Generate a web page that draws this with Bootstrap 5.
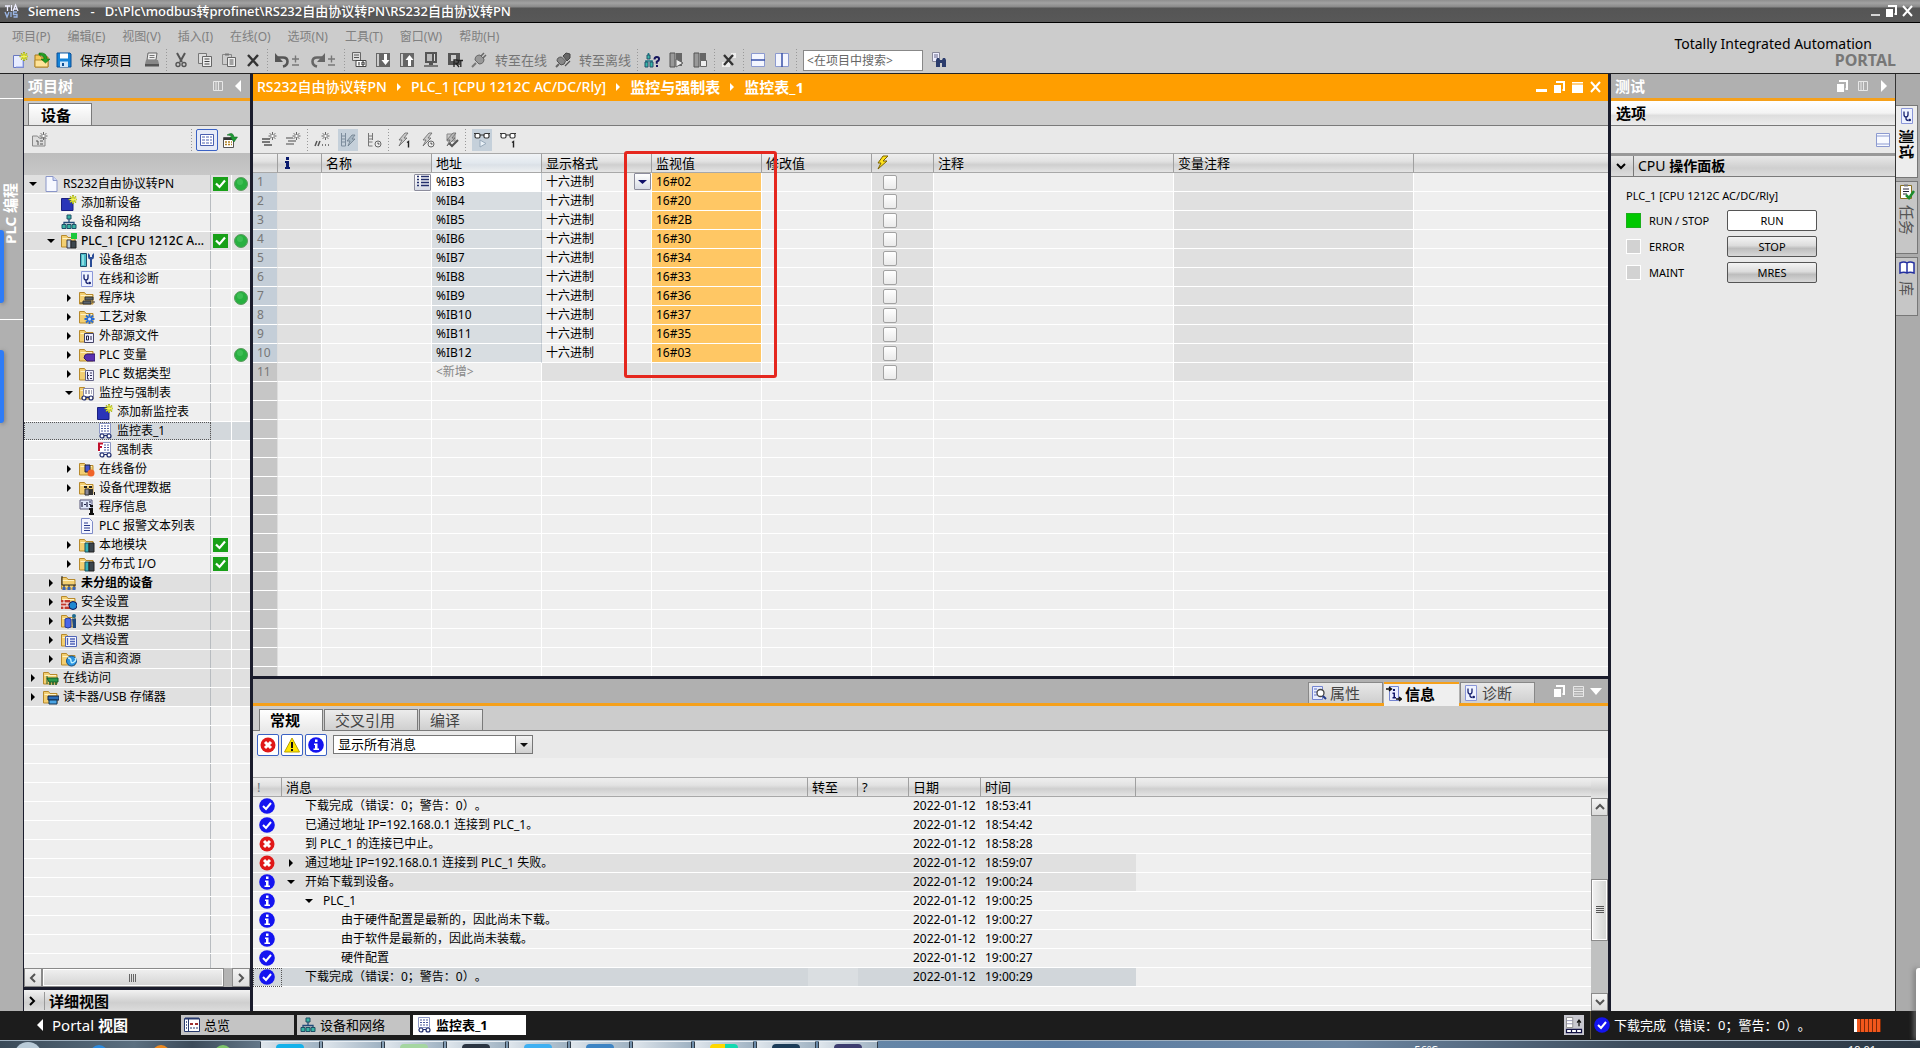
<!DOCTYPE html>
<html lang="zh-CN">
<head>
<meta charset="utf-8">
<meta name="viewport" content="width=device-width, initial-scale=1">
<title>Siemens - RS232自由协议转PN</title>
<link href="https://cdn.jsdelivr.net/npm/bootstrap@5.3.0/dist/css/bootstrap.min.css" rel="stylesheet">
<style>
  :root { --navy:#1a1c2c; --amber:#ff9e00; --pane:#e9e9e9; --cell:#efefef; --shade:#e0e0e0; --bar:#b0b0b0; --rule:#7a7a7a; }
  body { font-family:"Noto Sans","Noto Sans CJK SC",sans-serif; font-size:12px; line-height:18px; color:#000; background:#ccc; text-spacing-trim:space-all; }
  button, input, select { font:inherit; color:inherit; }
  button { background:none; border:0; padding:0; }
  .ic { width:16px; height:16px; flex:none; display:block; }
  .ic-pm { width:12px; }
  .f13 { font-size:13px; } .f14 { font-size:14px; } .f15 { font-size:15px; } .f16 { font-size:16px; }
  .g2 { gap:2px; } .g1 { gap:1px; } .g6 { gap:6px; }
  .min0 { min-height:0; min-width:0; }
  .titlebar { height:23px; background:linear-gradient(#8e8e8e,#a2a2a2 3px,#888 7px,#555 8px,#585858); border-bottom:1px solid #000; color:#fff; line-height:22px; font-weight:500; }
  .apphead { height:51px; border-bottom:1px solid #222; background:#ccc; }
  .menus { gap:17px; padding:5px 0 0 12px; }
  .menus a { color:#808080; text-decoration:none; }
  .tools { color:#757575; padding:3px 0 0 12px; }
  .vsep { width:1px; height:22px; margin:0 -2px; background:repeating-linear-gradient(#999 0 1px,transparent 1px 3px); flex:none; }
  .brand { padding-top:12px; }
  .portal { color:#777; line-height:14px; font-size:16px; font-weight:700; }
  .find { width:120px; height:21px; border:1px solid #888; background:#fff; padding:0 3px; color:#666; font-size:12px; border-radius:0; }
  .find::placeholder { color:#666; opacity:1; }
  .leftstrip { width:24px; background:var(--bar); border-right:1px solid var(--navy); }
  .stripcap { height:25px; border-bottom:1px solid #fff; }
  .stripbody { height:221px; border-bottom:1px solid #fff; }
  .uptext { writing-mode:vertical-rl; text-orientation:sideways; transform:rotate(180deg); color:#fff; font-weight:700; }
  .blue { left:0; width:4px; height:73px; background:#2f7cf6; border-radius:0 3px 3px 0; box-shadow:1px 1px 4px #777; }
  .blue-a { top:156px; } .blue-b { top:276px; }
  .treepane { width:229px; border-right:3px solid var(--navy); background:#c4c4c4; }
  .panehead { height:27px; background:var(--bar); border-bottom:3px solid #f5a01a; color:#fff; font-weight:700; font-size:15px; line-height:22px; }
  .tabrow { height:25px; background:#c8c8c8; border-bottom:1px solid var(--rule); }
  .toptab { height:22px; min-width:64px; background:linear-gradient(#fff,#e9e9e9); border:1px solid var(--rule); border-bottom:0; font-weight:700; font-size:15px; padding:0 12px; line-height:20px; text-align:left; }
  .toolrow { height:27px; background:var(--pane); }
  .boxbtn { width:22px; height:22px; background:#fff; border:1px solid #3b62c4; border-radius:2px; display:flex; align-items:center; justify-content:center; }
  .boxbtn.soft { background:#e6ebf7; }
  .treegap { height:22px; background:linear-gradient(#bdbdbd,#c8c8c8); }
  .trow { height:19px; background:var(--cell); border-bottom:1px solid #fff; }
  .trow.dk { background:var(--shade); }
  .trow.sel { background:#d3d8dc; }
  .trow.sel .tname { outline:1px dotted #555; outline-offset:-1px; }
  .tname { border-right:1px solid #b8bcc0; white-space:nowrap; overflow:hidden; }
  .tcol1 { width:21px; border-right:1px solid #fff; } .tcol2 { width:18px; }
  .tarrow { width:18px; } .tico { width:18px; margin-right:3px; }
  .tarrow svg { width:8px; height:10px; }
  .hbar { height:19px; background:#b4b4b4; }
  .sbtn { width:18px; background:linear-gradient(#f4f4f4,#dcdcdc); border:1px solid #8a8a8a; display:flex; align-items:center; justify-content:center; }
  .sthumb { background:linear-gradient(#f0f0f0,#d4d4d4); border:1px solid #8a8a8a; box-shadow:inset 0 0 0 1px #fff; }
  .details { height:24px; border-top:3px solid var(--navy); background:linear-gradient(#f2f2f2,#cfcfcf 60%,#dcdcdc); font-weight:700; font-size:15px; }
  .details span { border-left:1px solid #999; padding-left:4px; }
  .editor { border-right:3px solid var(--navy); background:var(--pane); }
  .crumbs { height:27px; background:var(--amber); color:#fff; font-weight:500; padding-bottom:2px; }
  .crumbs a { color:#fff; text-decoration:none; }
  .gapband { height:25px; background:#ccc; border-bottom:1px solid var(--rule); }
  .gtable { width:100%; table-layout:fixed; border-collapse:separate; border-spacing:0; }
  .gtable th { height:20px; padding:0 4px; font-weight:400; white-space:nowrap; background:linear-gradient(#efefef,#e2e2e2 40%,#cfcfcf 60%,#e4e4e4); border-top:1px solid #a8a8a8; border-bottom:1px solid #a8a8a8; border-right:1px solid #a0a0a0; line-height:17px; font-size:13px; }
  .gtable td { height:19px; padding:0 4px; line-height:18px; background:var(--cell); border-bottom:1px solid #fff; border-right:1px solid #fff; white-space:nowrap; overflow:hidden; }
  .gtable td:last-child, .gtable th:last-child { border-right:0; }
  .gtable td.g { background:var(--shade); }
  .watch td:first-child { background:#c6c6c6; color:#777; border-right-color:#ddd; }
  .watch tr.live td:first-child { background:#c4ced8; }
  .watch td.ad { background:#d8dde1; border-right-color:#c0c8d0; }
  .watch td.ad1 { background:#fff; border-right-color:#c0c8d0; }
  .watch th.hot { background:linear-gradient(#f0f3f6,#e2e8ee 50%,#dbe1e7 60%,#eef0f2); }
  .watch td.mv { background:#ffc764; }
  .minibtn { width:17px; height:17px; border:1px solid #8c8c9c; background:linear-gradient(#fff,#d8dce6); display:flex; align-items:center; justify-content:center; border-radius:1px; }
  .tick { appearance:none; display:block; width:14px; height:15px; margin:0 0 0 7px; border:1px solid #a2a2a2; border-radius:2px; background:linear-gradient(#fff,#eaeaea); }
  .mark-red { left:371px; top:77px; width:153px; height:227px; border:3px solid #e5271e; border-radius:3px; pointer-events:none; z-index:3; }
  .infopane { border-top:3px solid var(--navy); }
  .infohead { height:27px; background:linear-gradient(var(--bar) 24px,#f5a01a 24px); }
  .itab { width:75px; height:21px; margin-top:3px; background:linear-gradient(#e8e8e8,#cfcfcf); border:1px solid #888; border-bottom:0; color:#444; font-size:15px; display:flex; align-items:center; gap:3px; padding-left:2px; line-height:18px; }
  .itab.on { height:24px; background:#efefef; border:0; border-top:2px solid #f5a01a; padding-bottom:3px; color:#000; font-weight:700; }
  .subtabs { padding-left:6px; }
  .subtab { height:21px; border:1px solid var(--rule); border-bottom:0; background:linear-gradient(#ececec,#cfcfcf); color:#444; font-size:15px; padding:0 22px 0 10px; line-height:19px; margin-right:1px; text-align:left; }
  .subtab.on { background:linear-gradient(#fff,#e9e9e9); color:#000; font-weight:700; height:22px; margin-bottom:-1px; }
  .combo { width:200px; height:19px; border:1px solid #777; background:#fff; }
  .combo select { appearance:none; border:0; background:transparent; padding:0 4px; outline:0; font-size:13px; line-height:17px; }
  .combo span { width:17px; border-left:1px solid #777; background:linear-gradient(#f4f4f4,#d0d0d0); }
  .msg td { border-right:0; }
  .msg tr.sel td { background:#d1d6da; } .msg tr.sel td.lt { background:#dadee1; }
  .msg tr.sel td:first-child { outline:1px dotted #555; outline-offset:-1px; }
  .msg tr td.rest { background:var(--cell); }
  .msggap { height:19px; background:#efefef; }
  .msgbox { height:234px; }
  .vbar { width:17px; background:#c0c1c1; }
  .vbarcap { height:21px; background:linear-gradient(#efefef,#d0d0d0 60%,#e4e4e4); border-top:1px solid #a8a8a8; }
  .above { flex:6 0 0; } .below { flex:5 0 0; }
  .vbar .sbtn, .vbar .sthumb { width:17px; height:18px; }
  .vbar .sthumb { height:62px; background:linear-gradient(90deg,#f2f2f2,#d4d6d4); }
  .testpane { width:285px; background:var(--pane); border-right:1px solid #333; }
  .opthead { height:25px; background:linear-gradient(#fff,#f4f4f4 50%,#dedede 60%,#ececec); border-bottom:1px solid var(--rule); font-weight:700; font-size:15px; padding:0 5px; }
  .cpuhead { height:24px; border-top:3px solid #999; border-bottom:1px solid var(--rule); background:linear-gradient(#e8e8e8,#cfcfcf 60%,#dcdcdc); font-size:14px; padding-left:2px; }
  .cpuhead span { border-left:1px solid #777; padding-left:4px; line-height:20px; }
  .led { width:15px; height:15px; background:#d2d2d2; border:1px solid #fff; } .led.go { background:#00c800; border-color:#1cae1c; }
  .cpu { font-size:11px; padding:10px 15px 0; display:flex; flex-direction:column; gap:5px; }
  .cpulabel { width:78px; }
  .opbtn { width:90px; height:21px; border:1px solid #555; border-radius:2px; background:linear-gradient(#f4f4f4,#dcdcdc 45%,#bdbdbd 60%,#d8d8d8); }
  .opbtn.run { background:#fff; }
  .rstrip { width:24px; background:#ababab; }
  .vtab { width:22px; border:1px solid #777; border-left:0; background:#c6c6c6; color:#555; font-size:15px; display:flex; flex-direction:column; align-items:center; padding-top:2px; gap:5px; margin-bottom:3px; }
  .vtab.on { background:#ededed; color:#000; font-weight:700; }
  .vtab span { writing-mode:vertical-rl; text-orientation:sideways; line-height:18px; }
  .v1 { height:73px; margin-top:31px; } .v2 { height:73px; } .v3 { height:59px; }
  .popedge { right:0; bottom:8px; width:4px; height:72px; background:#fff; border-radius:3px 0 0 0; box-shadow:-2px 0 5px #777; }
  .status { height:29px; background:#1c1c1c; color:#fff; padding-bottom:1px; }
  .portalbtn { width:181px; padding-left:32px; }
  .winbtn { width:113px; height:20px; background:#c4c4c4; color:#000; display:flex; align-items:center; gap:4px; padding-left:3px; margin-right:3px; font-size:13px; }
  .winbtn.on { background:#fff; font-weight:700; }
  .dockic { width:20px; height:20px; margin-right:6px; }
  .statmsg { width:330px; border-left:1px solid #5b5138; padding-left:3px; }
  .prog { width:27px; height:13px; margin-right:39px; background:repeating-linear-gradient(90deg,#f2571c 0 3px,#7d2a08 3px 4px); border-left:3px solid #fff; }
  .taskbar { height:8px; overflow:hidden; background:linear-gradient(90deg,#3a4a58,#5b6f80 7%,#3c4b5a 10%,#8aa2b6 17%,#6a8aa8 40%,#5c7ea4 55%,#6c86a2 70%,#3d4c5c 85%,#2c3844); border-top:1px solid #9fb0bf; }
  .tb { width:60px; height:8px; margin-right:2px; background:linear-gradient(90deg,#dfe6ec,#9fb2c2); border:1px solid #2f3b47; border-top-color:#e8eef3; display:flex; justify-content:center; }
  .tb i { width:28px; height:7px; margin-top:2px; border-radius:4px 4px 0 0; }
  .tbs { margin-left:25px; }
  .orb { width:28px; height:28px; border-radius:50%; background:#b9cbd8; margin:1px 0 0 14px; }
  .blob { width:18px; height:18px; border-radius:50%; margin:4px 0 0 44px; }
  .clk { color:#fff; font-size:11px; line-height:14px; margin-top:2px; }
</style>
<script src="https://cdn.jsdelivr.net/npm/bootstrap@5.3.0/dist/js/bootstrap.bundle.min.js"></script>
</head>
<body class="vh-100 d-flex flex-column overflow-hidden position-relative">

<header class="titlebar d-flex align-items-center flex-shrink-0">
  <svg class="ic ms-1" data-ic="tia"></svg>
  <div class="f13 ms-2 flex-grow-1 text-nowrap">Siemens &nbsp; - &nbsp; D:\Plc\modbus转profinet\RS232自由协议转PN\RS232自由协议转PN</div>
  <div class="d-flex me-1">
    <button aria-label="最小化"><svg class="ic" data-ic="wmin"></svg></button>
    <button aria-label="还原"><svg class="ic" data-ic="wrest"></svg></button>
    <button aria-label="关闭"><svg class="ic" data-ic="wx"></svg></button>
  </div>
</header>

<div class="apphead d-flex justify-content-between flex-shrink-0">
  <div>
    <nav class="menus d-flex">
      <a href="#">项目(P)</a><a href="#">编辑(E)</a><a href="#">视图(V)</a><a href="#">插入(I)</a><a href="#">在线(O)</a><a href="#">选项(N)</a><a href="#">工具(T)</a><a href="#">窗口(W)</a><a href="#">帮助(H)</a>
    </nav>
    <div class="tools d-flex align-items-center gap-2 f13 text-nowrap" id="tools"></div>
  </div>
  <div class="brand text-end me-4">
    <div class="f14 me-4">Totally Integrated Automation</div>
    <div class="portal">PORTAL</div>
  </div>
</div>

<main class="d-flex flex-grow-1 min0">
  <aside class="leftstrip flex-shrink-0 position-relative">
    <div class="stripcap"></div>
    <div class="stripbody d-flex align-items-center justify-content-center pt-2 pe-1"><span class="uptext f15">PLC 编程</span></div>
    <div class="blue blue-a position-absolute"></div>
    <div class="blue blue-b position-absolute"></div>
  </aside>

  <section class="treepane flex-shrink-0 d-flex flex-column">
    <div class="panehead d-flex align-items-center px-1 flex-shrink-0">
      <span class="flex-grow-1">项目树</span>
      <svg class="ic" data-ic="cols"></svg><svg class="ic ms-1" data-ic="triL"></svg>
    </div>
    <div class="tabrow d-flex align-items-end px-1 flex-shrink-0"><button class="toptab">设备</button></div>
    <div class="toolrow d-flex align-items-center px-2 flex-shrink-0">
      <svg class="ic" data-ic="newfold"></svg>
      <span class="vsep ms-auto me-1"></span>
      <button class="boxbtn soft" aria-label="列表"><svg class="ic" data-ic="grid"></svg></button>
      <svg class="ic mx-1" data-ic="export"></svg>
    </div>
    <div class="treegap flex-shrink-0"></div>
    <div id="tree" class="flex-grow-1 min0 overflow-hidden"></div>
    <div class="hbar d-flex flex-shrink-0">
      <button class="sbtn" aria-label="左"><svg class="ic" data-ic="chL"></svg></button>
      <div class="sthumb me-2 flex-grow-1 d-flex align-items-center justify-content-center"><svg class="ic" data-ic="gripV"></svg></div>
      <button class="sbtn" aria-label="右"><svg class="ic" data-ic="chR"></svg></button>
    </div>
    <div class="details d-flex align-items-center flex-shrink-0"><svg class="ic me-1" data-ic="chRb"></svg><span>详细视图</span></div>
  </section>

  <section class="editor flex-grow-1 min0 d-flex flex-column position-relative">
    <div class="crumbs d-flex align-items-center px-1 f14 flex-shrink-0">
      <a href="#">RS232自由协议转PN</a><svg class="ic mx-1" data-ic="triS"></svg>
      <a href="#">PLC_1 [CPU 1212C AC/DC/Rly]</a><svg class="ic mx-1" data-ic="triS"></svg>
      <a href="#" class="fw-bold f15">监控与强制表</a><svg class="ic mx-1" data-ic="triS"></svg>
      <a href="#" class="fw-bold f15 flex-grow-1">监控表_1</a>
      <div class="d-flex g2">
        <button aria-label="最小化"><svg class="ic" data-ic="wmin2"></svg></button>
        <button aria-label="浮动"><svg class="ic" data-ic="wrest"></svg></button>
        <button aria-label="最大化"><svg class="ic" data-ic="wmax"></svg></button>
        <button aria-label="关闭"><svg class="ic" data-ic="wx"></svg></button>
      </div>
    </div>
    <div class="gapband flex-shrink-0"></div>
    <div class="toolrow d-flex align-items-center gap-2 px-2 flex-shrink-0" id="wtools"></div>
    <div class="flex-grow-1 min0 overflow-hidden">
      <table class="gtable watch">
        <colgroup><col style="width:25px"><col style="width:44px"><col style="width:110px"><col style="width:110px"><col style="width:110px"><col style="width:110px"><col style="width:110px"><col style="width:62px"><col style="width:240px"><col style="width:240px"><col></colgroup>
        <thead><tr><th></th><th><svg class="ic" data-ic="ismall"></svg></th><th>名称</th><th class="hot">地址</th><th>显示格式</th><th>监视值</th><th>修改值</th><th><svg class="ic" data-ic="bolt"></svg></th><th>注释</th><th>变量注释</th><th></th></tr></thead>
        <tbody id="watch"></tbody>
      </table>
    </div>
    <div class="mark-red position-absolute"></div>

    <section class="infopane flex-shrink-0">
      <div class="infohead d-flex justify-content-end align-items-start g1">
        <button class="itab"><svg class="ic" data-ic="prop"></svg>属性</button>
        <button class="itab on"><svg class="ic" data-ic="infot"></svg>信息</button>
        <button class="itab"><svg class="ic" data-ic="diag"></svg>诊断</button>
        <div class="d-flex g2 pt-1 ps-3 pe-1"><svg class="ic" data-ic="wrest"></svg><svg class="ic" data-ic="rows"></svg><svg class="ic" data-ic="triD"></svg></div>
      </div>
      <div class="gapband subtabs d-flex align-items-end">
        <button class="subtab on">常规</button><button class="subtab">交叉引用</button><button class="subtab">编译</button>
      </div>
      <div class="toolrow d-flex align-items-center px-1 g2">
        <button class="boxbtn" aria-label="错误"><svg class="ic" data-ic="err"></svg></button>
        <button class="boxbtn" aria-label="警告"><svg class="ic" data-ic="warn"></svg></button>
        <button class="boxbtn" aria-label="信息"><svg class="ic" data-ic="inf"></svg></button>
        <div class="combo d-flex ms-1"><select class="flex-grow-1" aria-label="显示"><option>显示所有消息</option></select><span class="d-flex align-items-center justify-content-center"><svg class="ic" data-ic="dd"></svg></span></div>
      </div>
      <div class="msggap"></div>
      <div class="msgbox d-flex overflow-hidden">
        <div class="flex-grow-1 min0">
        <table class="gtable msg">
          <colgroup><col style="width:29px"><col style="width:526px"><col style="width:50px"><col style="width:51px"><col style="width:72px"><col style="width:155px"><col></colgroup>
          <thead><tr><th class="text-secondary">!</th><th>消息</th><th>转至</th><th>?</th><th>日期</th><th>时间</th><th></th></tr></thead>
          <tbody id="msgs"></tbody>
        </table>
        </div>
        <div class="vbar d-flex flex-column">
          <div class="vbarcap"></div>
          <button class="sbtn" aria-label="上"><svg class="ic" data-ic="chU"></svg></button>
          <div class="above"></div>
          <div class="sthumb d-flex align-items-center"><svg class="ic" data-ic="gripH"></svg></div>
          <div class="below"></div>
          <button class="sbtn" aria-label="下"><svg class="ic" data-ic="chD"></svg></button>
        </div>
      </div>
    </section>
  </section>

  <aside class="testpane flex-shrink-0">
    <div class="panehead d-flex align-items-center px-1"><span class="flex-grow-1">测试</span><svg class="ic" data-ic="wrest"></svg><svg class="ic mx-1" data-ic="cols"></svg><svg class="ic" data-ic="triR"></svg></div>
    <div class="opthead d-flex align-items-center">选项</div>
    <div class="toolrow d-flex align-items-center justify-content-end px-1"><svg class="ic" data-ic="panel"></svg></div>
    <div class="cpuhead d-flex align-items-center"><svg class="ic me-1" data-ic="chDb"></svg><span>CPU <b>操作面板</b></span></div>
    <div class="cpu">
      <div>PLC_1 [CPU 1212C AC/DC/Rly]</div>
      <div class="d-flex align-items-center"><i class="led go me-2"></i><span class="cpulabel">RUN / STOP</span><button class="opbtn run">RUN</button></div>
      <div class="d-flex align-items-center"><i class="led me-2"></i><span class="cpulabel">ERROR</span><button class="opbtn">STOP</button></div>
      <div class="d-flex align-items-center"><i class="led me-2"></i><span class="cpulabel">MAINT</span><button class="opbtn">MRES</button></div>
    </div>
  </aside>
  <nav class="rstrip flex-shrink-0">
    <button class="vtab v1 on"><svg class="ic" data-ic="diag"></svg><span>测试</span></button>
    <button class="vtab v2"><svg class="ic" data-ic="task"></svg><span>任务</span></button>
    <button class="vtab v3"><svg class="ic" data-ic="book"></svg><span>库</span></button>
  </nav>
</main>

<footer class="status d-flex align-items-center flex-shrink-0">
  <button class="portalbtn f15 d-flex align-items-center"><svg class="ic me-1" data-ic="triL"></svg>Portal&nbsp;<b>视图</b></button>
  <button class="winbtn"><svg class="ic" data-ic="over"></svg>总览</button>
  <button class="winbtn"><svg class="ic" data-ic="net"></svg>设备和网络</button>
  <button class="winbtn on"><svg class="ic" data-ic="wt"></svg>监控表_1</button>
  <svg class="dockic ms-auto" data-ic="dock"></svg>
  <div class="statmsg d-flex align-items-center f13 h-100"><svg class="ic" data-ic="ok"></svg><span class="flex-grow-1 ms-1">下载完成（错误：0；警告：0）。</span><div class="prog"></div></div>
</footer>
<div class="taskbar d-flex flex-shrink-0">
  <div class="orb flex-shrink-0"></div><div class="blob ms-5" style="background:#2c8be0"></div><div class="blob" style="background:#ef8a1e"></div><div class="blob" style="background:#7fc66a"></div>
  <div class="tbs d-flex ms-4 ps-1">
    <div class="tb"><i style="background:#14b1ea"></i></div><div class="tb"></div><div class="tb"><i style="background:#a5d6a0"></i></div><div class="tb"><i style="background:#2b3542"></i></div><div class="tb"><i style="background:#3fb0f2"></i></div><div class="tb"><i style="background:#3d84c4"></i></div><div class="tb"></div><div class="tb"><i style="background:linear-gradient(90deg,#ffd800 55%,#12d9b0 55%)"></i></div><div class="tb"><i style="background:#1c3c58"></i></div><div class="tb"><i style="background:#3d3d70"></i></div>
  </div>
  <div class="clk ms-auto" style="margin-right:410px">56℃</div><div class="clk" style="margin-right:44px">19:01</div>
</div>
<div class="popedge position-absolute"></div>

<script>
const fold = '<path d="M.5 14V2.500h5l1.500 2h7V14z" fill="#f3cf72" stroke="#b88a2c"/><path d="M1.500 5.500h11.500" stroke="#fff2c4"/>';
const doc = '<path d="M2.500.5h8l3 3v12h-11z" fill="#f4f6ff" stroke="#7f8cc8"/>';
const glasses = '<circle cx="5" cy="13" r="2" fill="#fff" stroke="#1d2a6b" stroke-width="1.200"/><circle cx="12" cy="13" r="2" fill="#fff" stroke="#1d2a6b" stroke-width="1.200"/><path d="M7 12.500h3" stroke="#1d2a6b"/>';
const sheet = '<path d="M2.500.5h11v10h-11z" fill="#fff" stroke="#8c97c4"/><path d="M4 3h8M4 5.500h8M4 8h8" stroke="#4a5a9c" stroke-dasharray="2 1"/>';
const star = '<path d="M12 0v9M7.500 4.500h9M9 1.500l6 6M15 1.500l-6 6" stroke="#9aa800" stroke-width="1.600"/><path d="M12 1v7M8.500 4.500h7M9.500 2l5 5M14.500 2l-5 5" stroke="#f4f45a"/>';
const gstar = '<path d="M11.500 0v8M7.500 4h8M8.700 1.200l5.600 5.600M14.300 1.200l-5.600 5.600" stroke="#666"/><circle cx="11.500" cy="4" r="1.200" fill="#fff"/>';
const steth = '<path d="M5 3.500v3q0 2.500 2 2.500t2-2.500v-3M7 9v1.500q0 2 2.500 2" fill="none" stroke="#16206e" stroke-width="1.300"/><circle cx="10.700" cy="12" r="1.300" fill="#16206e"/>';
const rack = '<path d="M6 6h4v9H6z" fill="#39b3b8" stroke="#1c5060"/><path d="M10 6h5v9h-5z" fill="#3c464e" stroke="#222"/>';
const bolt = c => `<path d="M10 1 4 8h3l-3 6 8-8H9l4-5z" fill="${c}" stroke="#666" stroke-width=".8"/>`;
const num1 = '<path d="M12 10.500l1.500-1v6" fill="none" stroke="#222" stroke-width="1.400"/>';
const clock = '<circle cx="12" cy="12" r="3" fill="#eee" stroke="#666"/><path d="M12 10.500V12h1.500" stroke="#444" fill="none"/>';
const goggles = '<path d="M0 1.500h3M13 1.500h3M6 3h4" stroke="#333"/><rect x="1" y="1.500" width="5" height="4.500" rx="1.500" fill="#fff" stroke="#333" stroke-width="1.200"/><rect x="10" y="1.500" width="5" height="4.500" rx="1.500" fill="#fff" stroke="#333" stroke-width="1.200"/>';
const chev = (d,w,c) => `<path d="${d}" fill="none" stroke="${c}" stroke-width="${w}"/>`;
const I = {
 tia:'<path d="M1 3h5M3.500 3v5M7.500 2v6M9 8l2.500-6L14 8M10 6h3" stroke="#eef" stroke-width="1.300" fill="none"/><path d="M1 9l2 5 2-5M7 9v5M13 9H9.500v2.500H13V14H9.500" stroke="#9ab6e6" stroke-width="1.300" fill="none"/>',
 wmin:'<path d="M3 12h9" stroke="#fff" stroke-width="1.500"/>', wmin2:'<path d="M2 11.500h11" stroke="#fff" stroke-width="3"/>',
 wrest:'<path d="M2 6h7v8H2z" fill="#fff"/><path d="M5 4V3h7v8h-1.500" fill="none" stroke="#fff" stroke-width="2"/>',
 wmax:'<path d="M2 3h11v11H2z" fill="#fff"/><path d="M2 5h11" stroke="#ff9e00"/>',
 wx:'<path d="M3 3l9 10M12 3 3 13" stroke="#fff" stroke-width="2"/>',
 cols:'<path d="M3.500 3.500h9v9h-9zM6 3.500v9M8.500 3.500v9" fill="none" stroke="#e8e8e8"/>',
 rows:'<path d="M3.500 3.500h10v10h-10zM3.500 6h10M3.500 8.500h10M3.500 11h10" fill="none" stroke="#e8e8e8"/>',
 triL:'<path d="M11 2v12L5 8z" fill="#fff"/>', triR:'<path d="M6 2v12l6-6z" fill="#fff"/>', triD:'<path d="M2 5h12l-6 7z" fill="#fff"/>', triS:'<path d="M6 4v8l4-4z" fill="#fff"/>',
 dd:'<path d="M4 6h8l-4 4z" fill="#111"/>', ddb:'<path d="M3 6h9l-4.500 4z" fill="#10106a"/>',
 chL:chev('M10 4 6 8l4 4',2,'#555'), chR:chev('M6 4l4 4-4 4',2,'#555'), chU:chev('M4 10l4-4 4 4',2,'#555'), chD:chev('M4 6l4 4 4-4',2,'#555'),
 chRb:chev('M6 4l4 4-4 4',2,'#000'), chDb:chev('M4 6l4 4 4-4',2,'#000'),
 gripV:'<path d="M4.500 4v8M6.500 4v8M8.500 4v8M10.500 4v8" stroke="#666"/>', gripH:'<path d="M4 4.500h8M4 6.500h8M4 8.500h8M4 10.500h8" stroke="#555"/>',
 newprj:'<path d="M1.500 3.500h7l3 3v9h-10z" fill="#e8edff" stroke="#6878c0"/><path d="M4 15h7V8" stroke="#8fa0e8" fill="none"/>'+star,
 openprj:'<path d="M1 3h5l1 2h7v10H1z" fill="#f5c95a" stroke="#a87a1c"/><path d="M1 15V8h13v7z" fill="#ffe49a" stroke="#b58a2e"/><path d="M5 1q8-1 8 6h3l-4.500 4L7 7h3q0-4-5-4z" fill="#22a022" stroke="#0b650b" stroke-width=".6"/>',
 save:'<path d="M1 1h13l1 1v13H1z" fill="#1583d8" stroke="#0b4f96"/><path d="M4 1.500h8v5H4z" fill="#fff"/><path d="M4 9.500h8V15H4z" fill="#cfe6fa"/><path d="M6 11h2v3H6z" fill="#0b4f96"/>',
 print:'<path d="M4 1h9l-1 7H3z" fill="#eee" stroke="#666"/><path d="M5.500 3.500h5M5.500 5.500h5" stroke="#777"/><path d="M2 8h12l1 4H1z" fill="#888"/><path d="M1 12h14v2.500H1z" fill="#555"/>',
 cut:'<path d="M4 1l5 9M12 1 7 10" stroke="#555" stroke-width="2"/><circle cx="5" cy="12.500" r="2" fill="none" stroke="#555" stroke-width="1.400"/><circle cx="11" cy="12.500" r="2" fill="none" stroke="#555" stroke-width="1.400"/>',
 copy:'<path d="M1.500 1.500h8v10h-8z" fill="#ddd" stroke="#777"/><path d="M5.500 4.500h9v10h-9z" fill="#eee" stroke="#666"/><path d="M7.500 7h5M7.500 9.500h5M7.500 12h5" stroke="#444"/>',
 paste:'<path d="M1.500 2.500h9v10h-9z" fill="#ccc" stroke="#888"/><path d="M4 1.500h4v2H4z" fill="#777"/><path d="M6.500 5.500h8v9h-8z" fill="#eee" stroke="#666"/><path d="M8.500 8h4M8.500 10h4M8.500 12h4" stroke="#555"/>',
 del:'<path d="M3 3l10 11M13 3 3 14" stroke="#333" stroke-width="2.400"/>',
 undo:'<path d="M4 5.500h5q4.500 0 4.500 4t-4.500 5" fill="none" stroke="#555" stroke-width="2.600"/><path d="M1 1v9h8z" fill="#555"/>',
 redo:'<path d="M12 5.500H7q-4.500 0-4.500 4t4.500 5" fill="none" stroke="#666" stroke-width="2.600"/><path d="M15 1v9H7z" fill="#666"/>',
 pm:'<path d="M2 7h7M5.500 3.500v7M2 13h7" stroke="#777" stroke-width="1.400"/>',
 comp:'<path d="M1.500.5h8v8h-8z" fill="#ddd" stroke="#666"/><path d="M3 3h5M3 5.500h5" stroke="#555"/><path d="M5 8.500h10v6H5z" fill="#fff" stroke="#444"/><path d="M8 10v3.500M11 10h2v3h-2z" stroke="#222" fill="none"/>',
 down:'<path d="M1 1h14v14H1z" fill="#666"/><path d="M3 2v12" stroke="#ccc" stroke-width="2"/><path d="M9 2h3v6h2.500L10.500 13 6.500 8H9z" fill="#fff"/>',
 up:'<path d="M1 1h14v14H1z" fill="#666"/><path d="M3 2v12" stroke="#ccc" stroke-width="2"/><path d="M9 14h3V8h2.500L10.500 3 6.500 8H9z" fill="#fff"/>',
 sim:'<path d="M2 0h12v11H2z" fill="#555"/><path d="M4 2h5v7H4z" fill="#bbb"/><path d="M11.500 2v7" stroke="#ddd"/><path d="M6 11h4v2H6z" fill="#555"/><path d="M1 13h14v2H1z" fill="#777"/>',
 rt:'<path d="M1 1h12v12H1z" fill="#555"/><path d="M4 3h5v6H4z" fill="#ccc"/><path d="M7 15V8h2.500q2 0 2 1.800T9 11.500l3 3.500M11.500 8.500H16M13.800 8.500V15" stroke="#222" stroke-width="1.300" fill="none"/>',
 plug:'<path d="M1 15l4-4" stroke="#777" stroke-width="2"/><path d="M4 8l4 4q5 0 5-5L9 3Q4 3 4 8z" fill="#999" stroke="#666"/><path d="M10 4l3-3M12 6l3-3" stroke="#666" stroke-width="1.500"/>',
 plug2:'<path d="M1 15l3-3" stroke="#666" stroke-width="2"/><path d="M2 9l4 4q4 0 4.500-4L6.500 5Q2 5 2 9z" fill="#888" stroke="#555"/><path d="M8 4l3-3 4 1v4l-3 3z" fill="#666" stroke="#444"/><path d="M10 14l5-5" stroke="#555" stroke-width="1.300"/>',
 acc:'<path d="M4.500 1v6M2 14V9h6v5" stroke="#1b7a86" stroke-width="1.600" fill="none"/><path d="M3 3h3v4H3zM1 10h3v5H1zM6 10h3v5H6z" fill="#35b8a8" stroke="#22506a"/><path d="M10.500 7.500q0-2.500 2.300-2.500t2.200 2.200q0 1.500-2.200 2.500v2" stroke="#14145c" stroke-width="2" fill="none"/><path d="M12 13h2v2h-2z" fill="#14145c"/>',
 start:'<path d="M2 1h5v14H2z" fill="#999" stroke="#555"/><path d="M8 1h6v13H8z" fill="#666"/><path d="M8 7l7 4-7 4z" fill="#eee" stroke="#666"/>',
 stop:'<path d="M2 1h5v14H2z" fill="#999" stroke="#555"/><path d="M8 1h6v13H8z" fill="#666"/><path d="M8.500 8.500h6v6h-6z" fill="#eee" stroke="#666"/>',
 xref:'<path d="M1 10h8v5H1zM10 1h5v5h-5z" fill="#eee"/><path d="M3 3l9 10M12 3 3 13" stroke="#333" stroke-width="2.400"/>',
 splh:'<path d="M1.500 1.500h13v13h-13z" fill="#f4f6ff" stroke="#8c9ad0"/><path d="M1 8h14" stroke="#3850a8" stroke-width="1.500"/>',
 splv:'<path d="M1.500 1.500h13v13h-13z" fill="#f4f6ff" stroke="#8c9ad0"/><path d="M8 1v14" stroke="#3850a8" stroke-width="1.500"/>',
 bino:'<path d="M1.500.5h7v9h-7z" fill="#eef" stroke="#889"/><path d="M3 3h4M3 5h4" stroke="#668"/><path d="M5 8l1-2h2l1 2h2l1-2h2l1 2v7h-4v-4h-2v4H5z" fill="#2b3c6c"/>',
 newfold:'<path d="M.5 14V4h5l1.500 2h6V14z" fill="#ddd" stroke="#888"/><path d="M4 9h2v4M8 9h3M8 12h3" stroke="#555" fill="none"/>'+gstar,
 grid:'<path d="M1.500 2.500h13v11h-13z" fill="#fff" stroke="#4a60b0"/><path d="M3 5h10M3 8h10M3 11h10" stroke="#4a60b0" stroke-dasharray="3 1"/>',
 export:'<path d="M1.500 5.500h10v10h-10z" fill="#fff" stroke="#555"/><path d="M2 6h9v2H2z" fill="#333"/><path d="M3 10h7M3 12.500h7" stroke="#b08020" stroke-dasharray="2 1" stroke-width="1.500"/><path d="M5 3q6-4 7 2h3.500L12 10 8 5h2q-1-2-5-2z" fill="#1e9a34" stroke="#0c5c1c" stroke-width=".5"/>',
 ins:'<path d="M1 7h8M1 10h8M3 13h8" stroke="#777" stroke-width="2"/>'+gstar, ins2:'<path d="M1 6h7M3 9h8M1 12h8" stroke="#999" stroke-width="2"/>'+gstar,
 cmt:'<path d="M3 9l-2 5M6 9l-2 5M8 13h1M11 13h1M14 13h1" stroke="#555" stroke-width="1.500"/>'+gstar,
 b1:'<path d="M1.500 1v13h4M5.500 1v13M1.500 4h4M1.500 7h4M1.500 10h4" stroke="#7c8c9c" fill="none"/><path d="M12 3 7 9h3l-2 5 7-7h-3l3-4z" fill="#a8b8c4" stroke="#6c7c8c" stroke-width=".8"/>',
 b2:'<path d="M2.500 1v13h4M6.500 1v7M2.500 4h4M2.500 7h4M2.500 10h4" stroke="#777" fill="none"/>'+clock,
 z1:bolt('#ccc')+num1, z2:bolt('#ccc')+clock, z3:'<path d="M4 2h8v7H4z" fill="#ccc" stroke="#888"/>'+bolt('#bbb')+'<path d="M6 11l3 3 6-6" stroke="#555" stroke-width="2" fill="none"/>',
 g1:goggles+'<path d="M6 8v7l6-3.500z" fill="#e8f0f6" stroke="#9ab"/>', g2:goggles+num1,
 bolt:'<path d="M7 1 2 8h3l-3 6 9-8H7l5-5z" fill="#ffe11c" stroke="#7a6200"/>', ismall:'<path d="M4 2h3v3H4zM3 6h4v6h1v2H3v-2h1V8H3z" fill="#0a1a6c"/>',
 list:'<path d="M2 2.500h2M2 5.500h2M2 8.500h2M2 11.500h2M6 2.500h8M6 5.500h8M6 8.500h8M6 11.500h8" stroke="#24306c" stroke-width="1.500"/>',
 proj:'<path d="M3 .5h7l4 4v11H3z" fill="#f6f8ff" stroke="#8a96c8"/><path d="M10 .5v4h4" fill="#cdd6f6" stroke="#8a96c8"/>',
 add:'<path d="M.5 3.500h11.500v12H.5z" fill="#2a35b8" stroke="#1a2080"/>'+star,
 net:'<path d="M8 5v4M3 11V8.500h10V11" stroke="#234a78" fill="none" stroke-width="1.300"/><path d="M6 1h4v4H6zM1 10.500h4v4H1zM6 10.500h4v4H6zM11 10.500h4v4h-4z" fill="#3ab4a4" stroke="#1d4f66"/>',
 plc:fold+'<path d="M6 7h4v8H6z" fill="#bcd" stroke="#334"/><path d="M10 8h5v7h-5z" fill="#3c464e" stroke="#222"/><path d="M10 0h6v6h-6z" fill="#18c83c"/>',
 cfg:'<path d="M1.500 1.500h6v13h-6z" fill="#4cbcc8" stroke="#1e4a66"/><path d="M4 3v10" stroke="#cff"/><path d="M9 1v4q0 2 2 2.500V15h2V7.500q2-.5 2-2.500V1l-2 2v2h-2V3z" fill="#2b4d96"/>',
 diag:'<path d="M2.500.5h11v15h-11z" fill="#eef2ff" stroke="#8a96d8"/>'+steth,
 blk:fold+'<path d="M6 7h8v3H6zM4 11h8v3H4z" fill="#5a646c" stroke="#333"/><path d="M13 12h3M1 13h3" stroke="#333"/>',
 tech:fold+'<path d="M10.500 5v10M5.500 10h10M7 6.500l7 7M14 6.500l-7 7" stroke="#2a6cd0" stroke-width="1.800"/><circle cx="10.500" cy="10" r="1.500" fill="#cfe0ff"/>',
 src:fold+'<path d="M5.500 5.500h9v9h-9z" fill="#eef" stroke="#446"/><path d="M7.500 8h2v4h-2zM12 8v4" fill="none" stroke="#224"/>',
 tag:fold+'<path d="M6 8l2-1h8v7H8l-3-3z" fill="#5a30b0" stroke="#32186c"/>',
 typ:fold+'<path d="M6.500 4.500h8v10h-8z" fill="#eef" stroke="#668"/><path d="M8.500 6v7h1.500M8.500 9.500h1.500M11 7h2M11 9.500h2M11 12.500h2" stroke="#335" fill="none"/>',
 wfold:fold+'<path d="M4.500 3.500h10v8h-10z" fill="#fff" stroke="#88a"/><path d="M6 6h7M6 8h7" stroke="#557" stroke-dasharray="2 1"/>'+glasses,
 wt:sheet+glasses, ft:sheet+glasses+'<path d="M1 0h5v10H1z" fill="#fff"/><path d="M2 9V1.500h4M2 5h3" stroke="#c0102c" stroke-width="2" fill="none"/>',
 bak:fold+'<path d="M6 4h5v7H6z" fill="#4454cc" stroke="#223"/><circle cx="12" cy="12" r="3.500" fill="#f0642a"/>',
 prox:fold+'<path d="M5 6h3v2H5zM10 6h3v2h-3z" fill="#222"/><path d="M6 9h4v6H6z" fill="#889" stroke="#333"/><path d="M10 9h4v6h-4z" fill="#333"/><path d="M15 12h1v3h-1z" fill="#111"/>',
 pinf:'<path d="M1 1h12v9H1z" fill="#dfe6fa" stroke="#557"/><path d="M3 3v5M5 5.500h2M8 3v5M10 3h2M10 5.500h2" stroke="#224" stroke-width="1.200"/><path d="M11 6h3v2h-3zM10 9h4v5h1v2h-5v-2h1v-3h-1z" fill="#111"/>',
 txt:doc+'<path d="M5 5h4M5 7.500h6M5 10h6M5 12.500h6" stroke="#2a3a8c" stroke-width="1.200"/>',
 mod:fold+rack, ung:fold+'<path d="M1 1v9h14" stroke="#222" fill="none"/><path d="M3 10v3M8 10v3M13 10v3" stroke="#222"/><path d="M1.500 12h3v3h-3zM6.500 12h3v3h-3zM11.500 12h3v3h-3z" fill="#3a66b8"/>',
 sec:fold+'<path d="M0 6h9v9H0z" fill="#c2392c"/><path d="M0 9h9M0 12h9M3 6v3M6 9v3M3 12v3" stroke="#fff"/><circle cx="12" cy="11.500" r="4" fill="#1f88d0" stroke="#115"/>',
 pub:fold+'<path d="M4 6q3-2 6 0v8q-3 2-6 0z" fill="#4b66e8" stroke="#223a9c"/><circle cx="13" cy="3" r="2" fill="#1d6a90"/><path d="M11 5.500h4V15h-3z" fill="#1d4a80"/>',
 dset:fold+'<path d="M4.500 4.500h11v10h-11z" fill="#f4f6ff" stroke="#5064b8"/><path d="M6.500 6v7M9 7h5M9 9.500h5M9 12h5" stroke="#5064b8" stroke-width="1.300"/>',
 lang:fold+'<circle cx="10.500" cy="10" r="5" fill="#2b94e0" stroke="#12508c"/><path d="M7 7q3 0 3 3t3 1 1-4" stroke="#bff0ff" fill="none" stroke-width="1.400"/>',
 onl:fold+'<path d="M4 6v8M4 8h11v4H6z" fill="#2b9a4c" stroke="#145c28"/><path d="M7 12v3M10 12v3M13 12v3" stroke="#145c28" stroke-width="1.500"/>',
 card:fold+'<path d="M5 7h11v4H5z" fill="#2a6cb8" stroke="#124"/><path d="M6 11h8v4H6z" fill="#4aa4e4" stroke="#135"/>',
 chk:'<path d="M0 1h15v14H0z" fill="#18a018"/><path d="M3 7.500l3.500 3.500L12 4.500" stroke="#fff" stroke-width="2.200" fill="none"/>',
 dot:'<circle cx="8" cy="8" r="6.500" fill="#28b040" stroke="#5c9c60"/><circle cx="7" cy="6" r="3" fill="#4cc862" opacity=".6"/>',
 ok:'<circle cx="8" cy="8" r="7.800" fill="#1414f0"/><path d="M4 8l3 3 5-6" stroke="#fff" stroke-width="2" fill="none"/>',
 err:'<circle cx="8" cy="8" r="7.500" fill="#e01818"/><path d="M5 5l6 6M11 5l-6 6" stroke="#fff" stroke-width="3"/>',
 inf:'<circle cx="8" cy="8" r="7.800" fill="#1414f0"/><path d="M7 2.500h2.500V5H7zM6 6.500h3.500v5H11V13H5.500v-1.500H7V8H6z" fill="#fff"/>',
 warn:'<path d="M8 1l7.500 14H.5z" fill="#ffe600" stroke="#b8a000"/><path d="M7 5h2v6H7zM7 12h2v2H7z" fill="#111"/>',
 prop:'<path d="M1.500 1.500h10v13h-10z" fill="#e8edff" stroke="#7484d0"/><path d="M3 4h3M3 7h3M3 10h3" stroke="#6074c8"/><circle cx="9.500" cy="8" r="3.500" fill="#fff" stroke="#444" stroke-width="1.300"/><path d="M12 11l3 3" stroke="#223a8c" stroke-width="2"/>',
 infot:'<path d="M3.500.5h9v14h-9z" fill="#e8edff" stroke="#7484d0"/><path d="M0 3h5M3 1l2.500 2L3 5M10 13h5M13 11l2.500 2L13 15" stroke="#111" fill="none" stroke-width="1.400"/><path d="M7 3h2v2H7zM6.500 6.500h2.500V11h1v1.500H6.500V11h1V8h-1z" fill="#10186c"/>',
 panel:'<path d="M1.500 1.500h13v13h-13z" fill="#f8faff" stroke="#8c9ad0"/><path d="M2 4h12M2 12h12" stroke="#8c9ad0"/>',
 task:'<path d="M1.500 1.500h11v13h-11z" fill="#fff" stroke="#887020"/><path d="M4 5h6M4 7.500h6M4 10h4" stroke="#223"/><path d="M5 .5h4v2H5z" fill="#777"/><path d="M7 11l3 3 5-7" stroke="#1c8c2c" stroke-width="2.500" fill="none"/>',
 book:'<path d="M1 3q4-2 7 0 3-2 7 0v10q-4-1.500-7 0-3-1.500-7 0zM8 3v10" fill="#fff" stroke="#2430a0" stroke-width="1.500"/>',
 over:'<path d="M.5 1.500h15v13H.5z" fill="#fff" stroke="#26386c"/><path d="M1 1.500h14" stroke="#26386c" stroke-width="2"/><path d="M2 5h1M2 8h1M2 11h1" stroke="#26386c" stroke-width="1.500"/><path d="M4.500 2v12" stroke="#26386c"/><path d="M6 6h3v2H6zM11 6h3v2h-3z" fill="#a03030"/><path d="M6 11h8" stroke="#26386c" stroke-dasharray="2 1"/>',
 dock:'<path d="M0 0h16v16H0z" fill="#c8c8d0"/><path d="M2 2h5v8H2z" fill="#fff" stroke="#888" stroke-width=".7"/><path d="M2 4.500h5M2 7h5" stroke="#88a" stroke-width=".7"/><path d="M12 9V4M10.500 6L12 4l1.500 2" stroke="#111" fill="none"/><path d="M2 11.500h12v2.500H2zM6 11.500V14M10 11.500V14" fill="#fff" stroke="#114"/>'
};
const ic = (n, c='') => `<svg class="ic ${c}" data-ic="${n}"></svg>`;

document.getElementById('tools').innerHTML =
  '<span class="d-flex g6">'+['newprj','openprj','save'].map(n=>ic(n)).join('')+'</span><span class="text-black me-1">保存项目</span>'+ic('print')+'<i class="vsep"></i>'+
  ['cut','copy','paste','del'].map(n=>ic(n)).join('')+'<i class="vsep"></i><span class="d-flex">'+ic('undo')+ic('pm','ic-pm')+'</span><span class="d-flex">'+ic('redo')+ic('pm','ic-pm')+'</span><i class="vsep"></i>'+
  ['comp','down','up','sim','rt','plug'].map(n=>ic(n)).join('')+'<span>转至在线</span>'+ic('plug2')+'<span>转至离线</span><i class="vsep"></i>'+
  ['acc','start','stop'].map(n=>ic(n)).join('')+'<i class="vsep"></i>'+ic('xref')+'<i class="vsep"></i>'+ic('splh')+ic('splv')+
  '<i class="vsep"></i><input class="find" aria-label="搜索" placeholder="&lt;在项目中搜索&gt;">'+ic('bino');
const on = n => `<span style="background:#c5d0da;padding:3px 2px">${ic(n)}</span>`;
document.getElementById('wtools').innerHTML = ic('ins')+ic('ins2')+'<i class="vsep"></i>'+ic('cmt')+on('b1')+ic('b2')+'<i class="vsep"></i>'+ic('z1')+ic('z2')+ic('z3')+'<i class="vsep"></i>'+on('g1')+ic('g2');

// level, arrow (d = open, r = closed), icon, caption, flags: k check, o dot, s shaded, b bold, m medium, x selected
const nodes = [[0,'d','proj','RS232自由协议转PN','kos'],[1,'','add','添加新设备',''],[1,'','net','设备和网络',''],[1,'d','plc','PLC_1 [CPU 1212C A...','kosm'],
 [2,'','cfg','设备组态',''],[2,'','diag','在线和诊断',''],[2,'r','blk','程序块','o'],[2,'r','tech','工艺对象',''],[2,'r','src','外部源文件',''],[2,'r','tag','PLC 变量','o'],[2,'r','typ','PLC 数据类型',''],
 [2,'d','wfold','监控与强制表',''],[3,'','add','添加新监控表',''],[3,'','wt','监控表_1','x'],[3,'','ft','强制表',''],[2,'r','bak','在线备份',''],[2,'r','prox','设备代理数据',''],[2,'','pinf','程序信息',''],
 [2,'','txt','PLC 报警文本列表',''],[2,'r','mod','本地模块','k'],[2,'r','mod','分布式 I/O','k'],[1,'r','ung','未分组的设备','sb'],[1,'r','sec','安全设置','s'],[1,'r','pub','公共数据','s'],[1,'r','dset','文档设置','s'],
 [1,'r','lang','语言和资源','s'],[0,'r','onl','在线访问','s'],[0,'r','card','读卡器/USB 存储器','s']];
for (let i = 0; i < 14; i++) nodes.push([0,'','','','']);
document.getElementById('tree').innerHTML = nodes.map(([l,a,i,t,f]) => {
  const has = c => f.includes(c);
  const arrow = a === 'd' ? '<svg viewBox="0 0 8 10"><path d="M0 3h8L4 7z"/></svg>' : a === 'r' ? '<svg viewBox="0 0 8 10"><path d="M2 1v8l4-4z"/></svg>' : '';
  return `<div class="trow d-flex ${has('s')?'dk':''} ${has('x')?'sel':''}"><div class="tname d-flex align-items-center flex-grow-1" style="padding-left:${l*18}px"><span class="tarrow d-flex justify-content-center">${arrow}</span><span class="tico d-flex justify-content-center">${i?ic(i):''}</span><span class="${has('b')?'fw-bold':has('m')?'fw-medium':''}">${t}</span></div><div class="tcol1 d-flex align-items-center justify-content-center">${has('k')?ic('chk'):''}</div><div class="tcol2 d-flex align-items-center justify-content-center">${has('o')?ic('dot'):''}</div></div>`;
}).join('');

const vals = ['02','20','2B','30','34','33','36','37','35','03'];
let h = vals.map((v,i) => `<tr class="live"><td>${i+1}</td><td class="g"></td><td class="py-0 pe-0">${i?'':'<button class="minibtn ms-auto" aria-label="选择">'+ic('list')+'</button>'}</td><td class="${i?'ad':'ad1'}">%IB${i+3}</td><td class="pe-0"><div class="d-flex justify-content-between">十六进制${i?'':'<button class="minibtn" aria-label="格式">'+ic('ddb')+'</button>'}</div></td><td class="mv">16#${v}</td><td></td><td class="g"><input type="checkbox" class="tick" aria-label="修改 ${i+1}"></td><td></td><td class="g"></td><td></td></tr>`).join('');
h += '<tr><td>11</td><td class="g"></td><td></td><td style="color:#888">&lt;新增&gt;</td><td class="g"></td><td class="g"></td><td></td><td class="g"><input type="checkbox" class="tick" aria-label="修改 11"></td><td></td><td class="g"></td><td></td></tr>';
h += ('<tr>'+'<td></td>'.repeat(11)+'</tr>').repeat(16);
document.getElementById('watch').innerHTML = h;

const ms = [['ok','',0,'下载完成（错误：0；警告：0）。','18:53:41'],['ok','',0,'已通过地址 IP=192.168.0.1 连接到 PLC_1。','18:54:42'],['err','',0,'到 PLC_1 的连接已中止。','18:58:28'],['err','r',0,'通过地址 IP=192.168.0.1 连接到 PLC_1 失败。','18:59:07'],
 ['inf','d',0,'开始下载到设备。','19:00:24'],['inf','d',1,'PLC_1','19:00:25'],['inf','',2,'由于硬件配置是最新的，因此尚未下载。','19:00:27'],['inf','',2,'由于软件是最新的，因此尚未装载。','19:00:27'],['ok','',2,'硬件配置','19:00:27'],['ok','',0,'下载完成（错误：0；警告：0）。','19:00:29','sel']];
document.getElementById('msgs').innerHTML = ms.map(([i,a,l,t,tm,s]) => {
  const g = (l === 0 && a) ? 'g' : '';
  const arrow = a === 'd' ? '<svg width="10" height="10"><path d="M1 3h8L5 7z"/></svg>' : a === 'r' ? '<svg width="10" height="10"><path d="M3 1v8l4-4z"/></svg>' : '';
  return `<tr class="${s||''}"><td class="${g}" style="padding-left:6px">${ic(i)}</td><td class="${g}"><div class="d-flex align-items-center" style="padding-left:${l*18}px"><span class="d-flex" style="width:19px">${arrow}</span>${t}</div></td><td class="lt ${g}"></td><td class="${g}"></td><td class="${g}">2022-01-12</td><td class="${g}">${tm}</td><td class="rest"></td></tr>`;
}).join('')+('<tr>'+'<td></td>'.repeat(7)+'</tr>').repeat(2);

document.querySelectorAll('svg[data-ic]').forEach(s => { s.setAttribute('viewBox', s.dataset.ic === 'pm' ? '0 0 12 16' : '0 0 16 16'); s.setAttribute('aria-hidden','true'); s.innerHTML = I[s.dataset.ic]; });
</script>
</body>
</html>
